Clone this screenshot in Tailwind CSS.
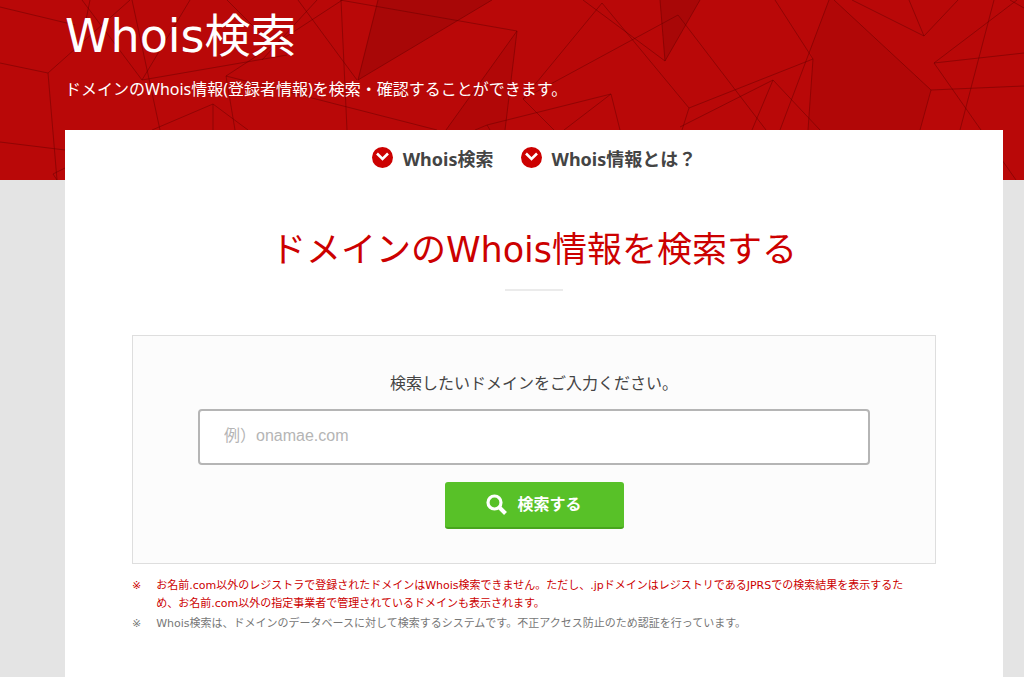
<!DOCTYPE html>
<html lang="ja">
<head>
<meta charset="utf-8">
<meta name="viewport" content="width=device-width, initial-scale=1">
<title>Whois検索</title>
<script src="https://cdn.jsdelivr.net/npm/@tailwindcss/browser@4"></script>
</head>
<body class="relative flex min-h-screen flex-col overflow-x-hidden bg-[#e4e4e4] font-['DejaVu_Sans','Noto_Sans_CJK_JP',sans-serif] text-[#444]">
  <!-- Decorative banner behind the header and the top of the panel -->
  <svg class="absolute inset-x-0 top-0 -z-0 h-[180px] w-full bg-[#b90808]" viewBox="0 0 1024 180" preserveAspectRatio="xMinYMin slice" aria-hidden="true">
    <g fill="#000">
      <path fill-opacity=".09" d="M378 0H492L358 80ZM660 0H700L665 61Z"/>
      <path fill-opacity=".04" d="M517 31L446 130H505ZM829 0H834L931 90L920 130H808L813 59L810 50Z"/>
    </g>
    <path fill="none" stroke="#6a0000" stroke-opacity=".5" d="M0 7L75 25M0 63L48 73L130 0M48 73L57 180M0 142L65 150M65 168L53 174L57 180M82 0L142 80L190 0M90 0L84 30M132 0L160 130M142 80L287 55M350 -5L226 76L235 130M226 76L437 130M152 130L213 104L248 130M213 104V130M298 0L357 80M227 0L262 35M317 0L262 60M341 0L347 130M340 0L517 31L446 130M517 31L505 130M378 0L358 80L492 0M475 130L487 125L611 94L620 130M611 94L564 130M487 125L490 130M554 130L523 99L678 15L766 130M523 99L602 3L689 108L682 130M583 0L665 61L700 0M660 0L665 61M689 108L813 59L775 0M813 59L808 130M680 127L773 80L820 130M773 80L752 130M829 0L780 130M834 0L931 90L1024 86M931 90L920 130M852 0L924 36L958 0M924 36L909 0M1017 0L934 63L1024 53M934 63L1016 180M994 0L960 130M1010 0L1024 8"/>
  </svg>

  <header class="relative mr-[21px] ml-[65px] h-[130px] text-white">
    <h1 class="pt-1 text-[46px] leading-[64px]">Whois検索</h1>
    <p class="pt-2 font-['Noto_Sans','Noto_Sans_CJK_JP',sans-serif] text-[16px] leading-[26px]">ドメインのWhois情報(登録者情報)を検索・確認することができます。</p>
  </header>

  <main class="relative mr-[21px] ml-[65px] grow bg-white px-[67px] pt-4 pb-10">
    <nav class="flex justify-center gap-[27px] font-['Noto_Sans','Noto_Sans_CJK_JP',sans-serif] text-[18px] leading-[26px] font-bold">
      <a href="#search" class="flex items-start gap-[10px]">
        <svg class="mt-[1px] size-[21px]" viewBox="0 0 21 21" aria-hidden="true"><circle cx="10.500" cy="10.500" r="10.500" fill="#cc0000"/><path d="M5 6.500L10.500 12L16 6.500" fill="none" stroke="#fff" stroke-width="2.600"/></svg>
        Whois検索
      </a>
      <a href="#about" class="flex items-start gap-[10px]">
        <svg class="mt-[1px] size-[21px]" viewBox="0 0 21 21" aria-hidden="true"><circle cx="10.500" cy="10.500" r="10.500" fill="#cc0000"/><path d="M5 6.500L10.500 12L16 6.500" fill="none" stroke="#fff" stroke-width="2.600"/></svg>
        Whois情報とは？
      </a>
    </nav>

    <section id="search">
      <h2 class="mt-[52px] text-center text-[35px] leading-[52px] text-[#cc0000]">ドメインのWhois情報を検索する</h2>
      <div class="mx-auto mt-[13px] h-[2px] w-[58px] bg-[#ebebeb]"></div>

      <form class="mt-11 border border-[#dedede] bg-[#fcfcfc] px-[65px] pt-[35px] pb-[34px]">
        <label for="domain" class="block text-center text-[16px] leading-[26px]">検索したいドメインをご入力ください。</label>
        <input id="domain" type="text" placeholder="例）onamae.com" class="mt-3 block h-14 w-full rounded-[4px] border-2 border-[#b5b5b5] bg-white px-6 pb-[2px] font-['Liberation_Sans','Noto_Sans_CJK_JP',sans-serif] text-[16px] placeholder:text-[#b5b5b5]">
        <button type="button" class="mx-auto mt-[17px] flex h-[47px] w-[179px] items-center justify-center gap-[10px] rounded-[3px] border-b-2 border-[#47a51d] bg-[#58c128] text-[16px] font-bold text-white">
          <svg class="size-[21px]" viewBox="0 0 21 21" fill="none" stroke="#fff" aria-hidden="true"><circle cx="8.500" cy="8.500" r="6.500" stroke-width="3.200"/><path d="M13 13L19.500 19.500" stroke-width="4"/></svg>
          検索する
        </button>
      </form>

      <ul class="mt-[13px] text-[11px] leading-[18px] text-[#777]">
        <li class="flex gap-[15px] text-[#cc0000]"><span>※</span><span>お名前.com以外のレジストラで登録されたドメインはWhois検索できません。ただし、.jpドメインはレジストリであるJPRSでの検索結果を表示するた<br>め、お名前.com以外の指定事業者で管理されているドメインも表示されます。</span></li>
        <li class="mt-[2px] flex gap-[15px]"><span>※</span><span>Whois検索は、ドメインのデータベースに対して検索するシステムです。不正アクセス防止のため認証を行っています。</span></li>
      </ul>
    </section>
  </main>
</body>
</html>
